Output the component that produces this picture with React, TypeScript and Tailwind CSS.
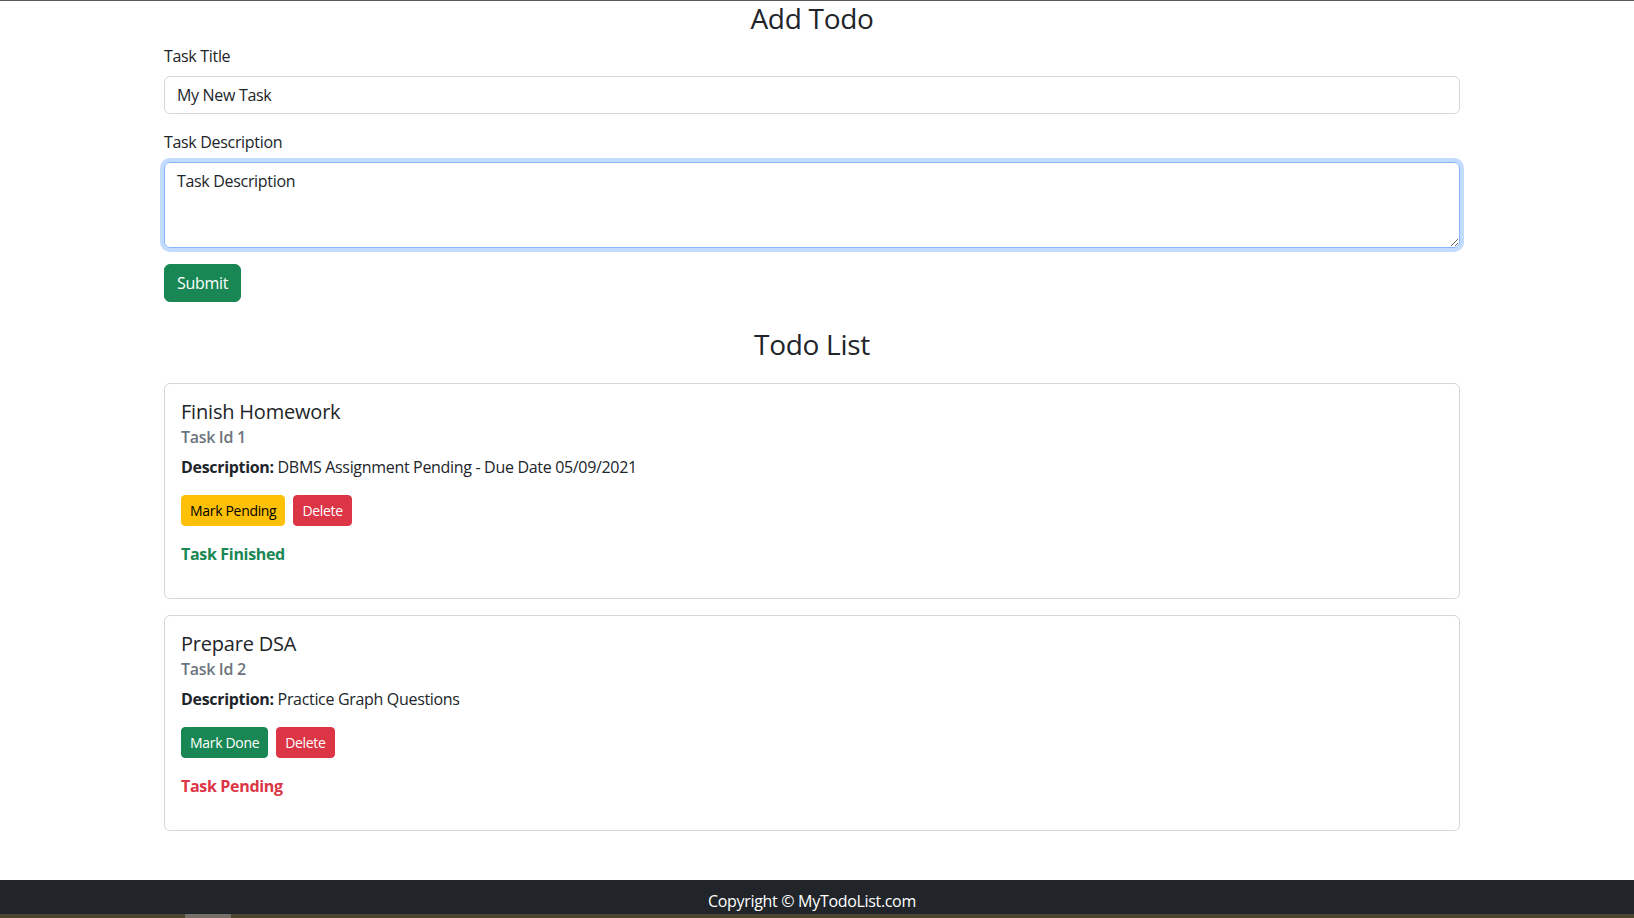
import React from "react";

type Todo = {
  id: number;
  title: string;
  desc: string;
  done: boolean;
};

const todos: Todo[] = [
  { id: 1, title: "Finish Homework", desc: "DBMS Assignment Pending - Due Date 05/09/2021", done: true },
  { id: 2, title: "Prepare DSA", desc: "Practice Graph Questions", done: false },
];

function TodoCard({ t }: { t: Todo }) {
  return (
    <div className="mb-4 rounded-[6px] border border-[#d6d6d6] p-4">
      <h5 className="mb-2 text-[20px] font-medium leading-[24px] tracking-[-0.01em]">{t.title}</h5>
      <h6 className="-mt-1 mb-2 text-[16px] font-semibold leading-[19.2px] text-[#6c757d]">Task Id {t.id}</h6>
      <p className="mb-4 text-[16px] leading-6">
        <b className="font-bold">Description:</b> {t.desc}
      </p>
      <div className="flex gap-2">
        {t.done ? (
          <button className="h-[31px] rounded-[4px] border border-[#ffc107] bg-[#ffc107] px-2 text-[14px] leading-[21px] text-black">
            Mark Pending
          </button>
        ) : (
          <button className="h-[31px] rounded-[4px] border border-[#198754] bg-[#198754] px-2 text-[14px] leading-[21px] text-white">
            Mark Done
          </button>
        )}
        <button className="h-[31px] rounded-[4px] border border-[#dc3545] bg-[#dc3545] px-2 text-[14px] leading-[21px] text-white">
          Delete
        </button>
      </div>
      {t.done ? (
        <p className="mb-4 mt-4 text-[16px] font-bold leading-6 text-[#198754]">Task Finished</p>
      ) : (
        <p className="mb-4 mt-4 text-[16px] font-bold leading-6 text-[#dc3545]">Task Pending</p>
      )}
    </div>
  );
}

export default function App() {
  return (
    <div className="flex min-h-[918px] flex-col border-t border-[#5a5a5a] bg-white font-['Open_Sans',sans-serif] tracking-[-0.02em] text-[#212529]">
      <main className="flex-1 pr-[10px]">
        <div className="mx-auto max-w-[1320px] px-3">
          <h3 className="mb-[9px] h-[34px] text-center text-[28px] font-medium leading-[34px] tracking-[-0.01em]">Add Todo</h3>
          <div className="mb-4">
            <label className="mb-2 block text-[16px] leading-6">Task Title</label>
            <input
              type="text"
              defaultValue="My New Task"
              className="block h-[38px] w-full rounded-[6px] border border-[#d3d6da] px-3 py-[6px] text-[16px] leading-6 tracking-[-0.02em] text-[#212529] outline-none"
            />
          </div>
          <div className="mb-4">
            <label className="mb-2 block text-[16px] leading-6">Task Description</label>
            <textarea
              rows={3}
              defaultValue="Task Description"
              className="block h-[86px] w-full rounded-[6px] border border-[#86b7fe] px-3 py-[6px] text-[16px] leading-6 tracking-[-0.02em] text-[#212529] shadow-[0_0_0_4px_rgba(13,110,253,0.25)] outline-none"
            />
          </div>
          <button className="h-[38px] rounded-[6px] border border-[#198754] bg-[#198754] px-3 text-[16px] leading-6 text-white">
            Submit
          </button>

          <h3 className="mb-[22px] mt-[25px] h-[34px] text-center text-[28px] font-medium leading-[34px] tracking-[-0.01em]">Todo List</h3>
          {todos.map((t) => (
            <TodoCard key={t.id} t={t} />
          ))}
        </div>
      </main>
      <footer className="bg-[#212529]">
        <div className="h-[34px] pt-[9px] pr-[10px] text-center text-[16px] leading-6 text-white">
          Copyright © MyTodoList.com
        </div>
        <div className="flex h-[4px] bg-[#4a4431]">
          <div className="w-[185px]" />
          <div className="w-[46px] bg-[#75716a]" />
        </div>
      </footer>
    </div>
  );
}
